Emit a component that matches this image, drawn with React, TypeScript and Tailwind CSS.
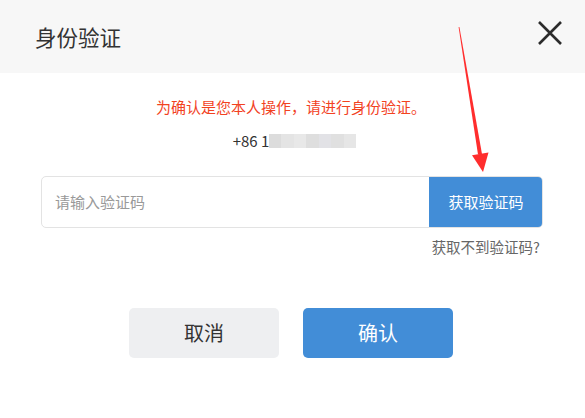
import React from "react";

const font = { fontFamily: '"Noto Sans CJK SC", "Noto Sans", sans-serif' };

function Mosaic() {
  const blocks = [
    ["#dcdcdc", 12],
    ["#e4e4e4", 13],
    ["#e8e8e8", 12],
    ["#dedede", 13],
    ["#e2e2e6", 12],
    ["#e0e0e0", 13],
    ["#e6e6e6", 12],
  ] as const;
  return (
    <span className="inline-flex h-[14px] items-stretch align-middle">
      {blocks.map(([c, w], i) => (
        <span key={i} style={{ background: c, width: w }} />
      ))}
    </span>
  );
}

export default function App() {
  return (
    <div className="relative h-[418px] w-[585px] overflow-hidden bg-white" style={font}>
      <div className="flex h-[73px] items-center justify-between bg-[#f7f7f7] pl-[35px] pr-[22px]">
        <span className="text-[21.5px] leading-[28px] text-[#333]">身份验证</span>
        <svg width="26" height="26" viewBox="0 0 26 26" className="mb-[7px]">
          <path d="M2 2 L24 24 M24 2 L2 24" stroke="#2b2b2b" strokeWidth="2.6" strokeLinecap="butt" />
        </svg>
      </div>

      <div className="flex flex-col items-center">
        <p className="mt-[24px] pr-[3px] text-[15px] leading-[20px] text-[#f2421f]">
          为确认是您本人操作，请进行身份验证。
        </p>
        <div className="mt-[14px] flex items-center pl-[4px] text-[15px] leading-[20px] text-[#333]">
          <span>+86 1</span>
          <Mosaic />
        </div>

        <div className="mt-[25px] flex h-[52px] w-[502px] self-start ml-[41px] overflow-hidden rounded-[5px] border border-[#e3e3e3]">
          <div className="flex flex-1 items-center pl-[13px] text-[15px] text-[#999]">请输入验证码</div>
          <button className="-my-px -mr-px w-[114px] rounded-r-[5px] bg-[#428dd7] text-[15px] text-white">
            获取验证码
          </button>
        </div>
        <div className="mt-[9px] ml-[41px] w-[502px] self-start pr-[3px] text-right text-[14.5px] leading-[20px] text-[#666]">
          获取不到验证码?
        </div>

        <div className="mt-[51px] flex gap-[24px] pr-[3px]">
          <button className="h-[50px] w-[150px] rounded-[5px] bg-[#eeeff1] text-[20px] text-[#333]">取消</button>
          <button className="h-[50px] w-[150px] rounded-[5px] bg-[#428dd7] text-[20px] text-white">确认</button>
        </div>
      </div>

      <svg className="pointer-events-none absolute left-0 top-0" width="585" height="418">
        <polygon points="458.6,27 459.4,27 482,154 478,154.5" fill="#ff2d2d" />
        <polygon points="472,155.3 488.5,152.5 483,172" fill="#ff2d2d" />
      </svg>
    </div>
  );
}
